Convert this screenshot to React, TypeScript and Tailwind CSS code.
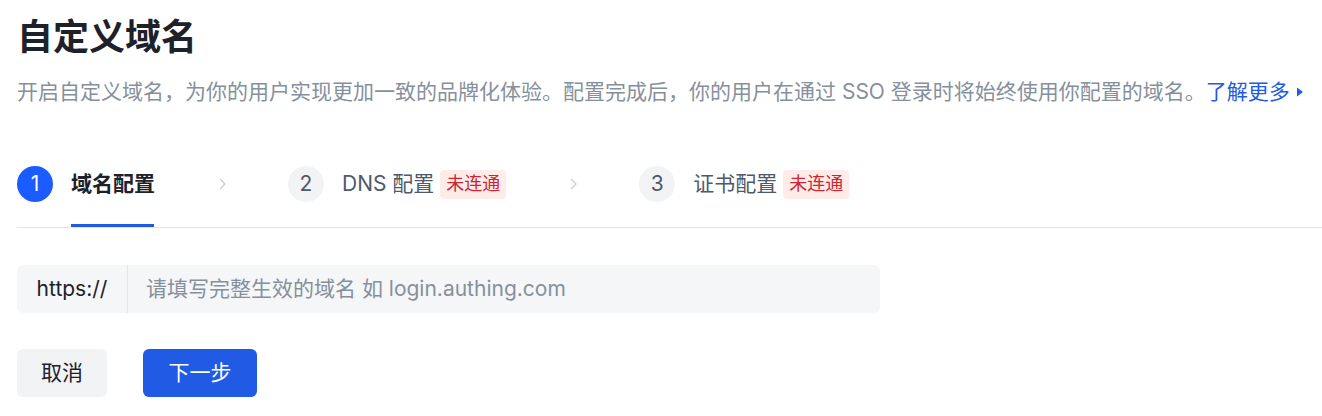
import React from "react";

const FONT = { fontFamily: 'Inter, "Noto Sans CJK SC", "Noto Sans", sans-serif' };

function Chevron() {
  return (
    <svg width="16" height="16" viewBox="0 0 16 16" className="ml-[60px] mr-[57px] shrink-0">
      <path d="M5.5 3.5 L10 8 L5.5 12.5" fill="none" stroke="#c9cdd4" strokeWidth="1.4" strokeLinecap="round" strokeLinejoin="round" />
    </svg>
  );
}

function Tag() {
  return (
    <span className="ml-[6px] inline-flex h-[29px] items-center rounded-[4px] bg-[#ffece8] px-[6px] text-[18px] leading-none text-[#cb2634]">
      未连通
    </span>
  );
}

function Step({ n, label, active, tag }: { n: number; label: string; active?: boolean; tag?: boolean }) {
  return (
    <div className="flex items-start">
      <div
        className={
          active
            ? "flex h-[36px] w-[36px] shrink-0 items-center justify-center rounded-full bg-[#1a5cff] text-[21px] text-white"
            : "flex h-[36px] w-[36px] shrink-0 items-center justify-center rounded-full bg-[#f2f3f5] text-[21px] text-[#4e5969]"
        }
      >
        {n}
      </div>
      <div className="ml-[18px] flex flex-col">
        <div className="flex h-[36px] items-center">
          <span
            className={
              active
                ? "text-[21px] font-bold leading-[36px] text-[#1d2129]"
                : "text-[21px] leading-[36px] text-[#4e5969]"
            }
          >
            {label}
          </span>
          {tag && <Tag />}
        </div>
        {active && <div className="mt-[22px] h-[3px] w-[83px] bg-[#215ae5]" />}
      </div>
    </div>
  );
}

export default function App() {
  return (
    <div className="w-[1322px] h-[416px] overflow-hidden bg-white pl-[17px] pt-[12px]" style={FONT}>
      <h1 className="text-[36px] font-bold leading-[50px] text-[#1d2129]">自定义域名</h1>
      <div className="mt-[14px] flex items-center text-[21px] leading-[32px] text-[#86909c]">
        <span>开启自定义域名，为你的用户实现更加一致的品牌化体验。配置完成后，你的用户在通过 SSO 登录时将始终使用你配置的域名。</span>
        <span className="text-[#215ae5]">了解更多</span>
        <svg width="8" height="10" viewBox="0 0 8 10" className="ml-[6px]">
          <path d="M1 0.5 L7 5 L1 9.5 Z" fill="#215ae5" />
        </svg>
      </div>

      <div className="mt-[58px] flex items-start">
        <Step n={1} label="域名配置" active />
        <div className="flex h-[36px] items-center">
          <Chevron />
        </div>
        <Step n={2} label="DNS 配置" tag />
        <div className="flex h-[36px] items-center">
          <Chevron />
        </div>
        <Step n={3} label="证书配置" tag />
      </div>
      <div className="h-px bg-[#e5e6eb]" />

      <div className="mt-[37px] flex h-[48px] w-[863px] items-stretch rounded-[6px] bg-[#f5f6f8]">
        <div className="flex w-[111px] items-center justify-center border-r border-[#e5e6eb] text-[21px] text-[#1d2129]">
          https://
        </div>
        <div className="flex items-center pl-[18px] text-[21px] text-[#86909c]">
          请填写完整生效的域名 如 login.authing.com
        </div>
      </div>

      <div className="mt-[36px] flex gap-[36px]">
        <button className="h-[48px] w-[90px] rounded-[6px] bg-[#f2f3f5] text-[21px] text-[#1d2129]">取消</button>
        <button className="h-[48px] w-[114px] rounded-[6px] bg-[#215ae5] text-[21px] text-white">下一步</button>
      </div>
    </div>
  );
}
